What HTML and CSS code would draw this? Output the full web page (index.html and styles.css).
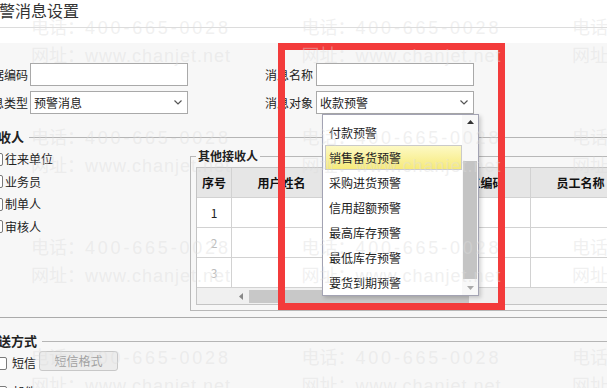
FILE: index.html
```html
<!DOCTYPE html>
<html lang="zh-CN">
<head>
  <meta charset="UTF-8">
  <title>预警消息设置</title>
  <link rel="stylesheet" href="styles.css">
</head>
<body>
  <div class="page">
    <div class="header"><h1>预警消息设置</h1></div>
    <div class="header-gap"></div>

    <div class="main">
      <div class="form-row">
        <label class="lbl">单据编码</label>
        <input type="text" class="txt">
        <label class="lbl lbl-right">消息名称</label>
        <input type="text" class="txt">
      </div>
      <div class="form-row">
        <label class="lbl">消息类型</label>
        <div class="select">
          <span>预警消息</span>
          <svg width="8" height="5" viewBox="0 0 8 5"><polyline points="0.5,0.5 4,4 7.5,0.5" fill="none" stroke="#555" stroke-width="1.2"/></svg>
        </div>
        <label class="lbl lbl-right">消息对象</label>
        <div class="select">
          <span>收款预警</span>
          <svg width="8" height="5" viewBox="0 0 8 5"><polyline points="0.5,0.5 4,4 7.5,0.5" fill="none" stroke="#555" stroke-width="1.2"/></svg>
        </div>
      </div>

      <!-- 接收人 -->
      <div class="section receivers">
        <div class="section-title">接收人</div>
        <div class="receivers-body">
          <ul class="check-list">
            <li><span class="cb"></span>往来单位</li>
            <li><span class="cb"></span>业务员</li>
            <li><span class="cb"></span>制单人</li>
            <li><span class="cb"></span>审核人</li>
          </ul>
          <fieldset class="other">
            <legend>其他接收人</legend>
            <div class="grid">
              <table>
                <colgroup>
                  <col style="width:35px"><col style="width:100px"><col style="width:99px"><col style="width:100px"><col style="width:100px">
                </colgroup>
                <tr><th>序号</th><th>用户姓名</th><th>用户编码</th><th>员工编码</th><th>员工名称</th></tr>
                <tr><td>1</td><td></td><td></td><td></td><td></td></tr>
                <tr class="blank"><td>2</td><td></td><td></td><td></td><td></td></tr>
                <tr class="blank"><td>3</td><td></td><td></td><td></td><td></td></tr>
              </table>
              <div class="hscroll">
                <div class="frozen"></div>
                <div class="arrow"><svg width="4" height="7" viewBox="0 0 4 7"><polygon points="4,0 0,3.5 4,7" fill="#888"/></svg></div>
                <div class="thumb"></div>
              </div>
            </div>
          </fieldset>
        </div>
      </div>

      <!-- 发送方式 -->
      <div class="section send">
        <div class="section-title">发送方式</div>
        <div class="send-row"><span class="cb"></span><span>短信</span><button disabled>短信格式</button></div>
        <div class="send-row"><span class="cb"></span><span>邮件</span></div>
      </div>
    </div>

    <!-- open list of 消息对象 -->
    <div class="dropdown">
      <ul class="options">
        <li>付款预警</li>
        <li class="on">销售备货预警</li>
        <li>采购进货预警</li>
        <li>信用超额预警</li>
        <li>最高库存预警</li>
        <li>最低库存预警</li>
        <li>要货到期预警</li>
      </ul>
      <div class="vscroll">
        <div class="btn"><svg width="7" height="4" viewBox="0 0 7 4"><polygon points="0,4 3.5,0 7,4" fill="#333"/></svg></div>
        <div class="track"><div class="thumb"></div></div>
        <div class="btn"><svg width="7" height="4" viewBox="0 0 7 4"><polygon points="0,0 3.5,4 7,0" fill="#aaa"/></svg></div>
      </div>
    </div>

    <div class="mark-box"></div>

    <div class="watermark">
      <div class="wm"><p><span>电话：</span><span class="tel">400-665-0028</span></p><p><span>网址：</span><span class="url">www.chanjet.net</span></p></div>
      <div class="wm"><p><span>电话：</span><span class="tel">400-665-0028</span></p><p><span>网址：</span><span class="url">www.chanjet.net</span></p></div>
      <div class="wm"><p><span>电话：</span><span class="tel">400-665-0028</span></p><p><span>网址：</span><span class="url">www.chanjet.net</span></p></div>
      <div class="wm"><p><span>电话：</span><span class="tel">400-665-0028</span></p><p><span>网址：</span><span class="url">www.chanjet.net</span></p></div>
      <div class="wm"><p><span>电话：</span><span class="tel">400-665-0028</span></p><p><span>网址：</span><span class="url">www.chanjet.net</span></p></div>
      <div class="wm"><p><span>电话：</span><span class="tel">400-665-0028</span></p><p><span>网址：</span><span class="url">www.chanjet.net</span></p></div>
      <div class="wm"><p><span>电话：</span><span class="tel">400-665-0028</span></p><p><span>网址：</span><span class="url">www.chanjet.net</span></p></div>
      <div class="wm"><p><span>电话：</span><span class="tel">400-665-0028</span></p><p><span>网址：</span><span class="url">www.chanjet.net</span></p></div>
      <div class="wm"><p><span>电话：</span><span class="tel">400-665-0028</span></p><p><span>网址：</span><span class="url">www.chanjet.net</span></p></div>
      <div class="wm"><p><span>电话：</span><span class="tel">400-665-0028</span></p><p><span>网址：</span><span class="url">www.chanjet.net</span></p></div>
      <div class="wm"><p><span>电话：</span><span class="tel">400-665-0028</span></p><p><span>网址：</span><span class="url">www.chanjet.net</span></p></div>
      <div class="wm"><p><span>电话：</span><span class="tel">400-665-0028</span></p><p><span>网址：</span><span class="url">www.chanjet.net</span></p></div>
    </div>
  </div>
</body>
</html>
```

FILE: styles.css
```css
* {
  box-sizing: border-box;
}

body {
  margin: 0;
  overflow: hidden;
  background: #fff;
  color: #222;
  font-family: "Noto Sans CJK SC", "Liberation Sans", sans-serif;
  font-size: 12px;
  line-height: 16px;
}

.page {
  position: relative;
  width: 660px;
  height: 400px;
  margin-left: -24px;
}

.header {
  height: 28px;
  padding-left: 7px;
  border-bottom: 1px solid #dcdcdc;
}

.header h1 {
  margin: 0;
  font-size: 16px;
  font-weight: normal;
  line-height: 20px;
  color: #333;
}

.header-gap {
  height: 15px;
}

.main {
  height: 357px;
  padding-top: 20px;
  background: #f7f7f7;
}

/* top form */
.form-row {
  display: flex;
  align-items: center;
  height: 23px;
  padding-left: 4px;
  margin-bottom: 5px;
}

.lbl {
  width: 48px;
  margin-right: 2px;
  text-align: right;
  white-space: nowrap;
}

.lbl-right {
  margin-left: 77px;
  margin-right: 3px;
}

.txt, .select {
  width: 158px;
  height: 23px;
  margin: 0;
  border: 1px solid #a9a9a9;
  background: #fff;
}

.select {
  display: flex;
  align-items: center;
  justify-content: space-between;
  padding: 0 5px 0 3px;
}

/* sections */
.section-title {
  display: flex;
  align-items: center;
  height: 16px;
  padding-left: 9px;
  font-size: 13px;
  font-weight: bold;
}

.section-title::after {
  content: "";
  flex: 1;
  height: 1px;
  margin-left: 5px;
  background: #b5b5b5;
}

.receivers {
  margin-top: 15px;
  padding-bottom: 6px;
  border-bottom: 1px solid #ababab;
}

.receivers-body {
  display: flex;
  margin-top: 3px;
}

.check-list {
  width: 214px;
  margin: 0;
  padding: 0 0 0 14px;
  list-style: none;
}

.check-list li {
  display: flex;
  align-items: center;
  height: 22.5px;
}

.cb {
  flex: none;
  width: 13px;
  height: 13px;
  border: 1px solid #7a7a7a;
  border-radius: 2px;
  background: #fff;
}

.check-list .cb {
  margin-right: 2px;
}

.other {
  flex: 1;
  min-width: 0;
  margin: 0;
  padding: 0 5px 5px;
  border: 1px solid #b8b8b8;
}

.other legend {
  padding: 0 2px;
  font-weight: bold;
  line-height: 16px;
}

.grid {
  width: 434px;
  margin-top: 3px;
  border: 1px solid #c4c4c4;
  background: #fff;
}

.grid table {
  width: 434px;
  border-collapse: separate;
  border-spacing: 0;
  table-layout: fixed;
}

.grid th, .grid td {
  height: 30px;
  padding: 0;
  border-right: 1px solid #d2d2d2;
  border-bottom: 1px solid #d2d2d2;
  text-align: center;
  white-space: nowrap;
  overflow: hidden;
}

.grid th {
  background: #e6e6e6;
  color: #111;
}

.grid .blank td {
  color: #bdbdbd;
}

.hscroll {
  display: flex;
  height: 16px;
  background: #f0f0f0;
}

.hscroll .frozen {
  width: 35px;
}

.hscroll .arrow {
  display: flex;
  align-items: center;
  justify-content: center;
  width: 17px;
}

.hscroll .thumb {
  width: 220px;
  margin: 2px 0 1px;
  background: #c8c8c8;
}

.send .section-title {
  margin-top: 15px;
}

.send-row {
  display: flex;
  align-items: flex-end;
  height: 20px;
  margin-top: 2px;
  padding-left: 18px;
}

.send-row + .send-row {
  margin-top: 9px;
}

.send-row .cb {
  margin: 0 5px 1px 0;
}

.send-row button {
  width: 79px;
  height: 20px;
  margin-left: 3px;
  padding: 0;
  border: 1px solid #c8c8c8;
  border-radius: 3px;
  background: #ececec;
  color: #a0a0a0;
  font: inherit;
}

/* open select list */
.dropdown {
  position: absolute;
  left: 346px;
  top: 114px;
  display: flex;
  width: 157px;
  height: 182px;
  border: 1px solid #a3a3b3;
  background: #fff;
  box-shadow: 2px 2px 4px rgba(0, 0, 0, 0.18);
}

.options {
  flex: 1;
  margin: 0;
  padding: 5px 0 0 2px;
  list-style: none;
}

.options li {
  height: 25px;
  padding-left: 4px;
  line-height: 25px;
  white-space: nowrap;
}

.options li.on {
  padding-left: 3px;
  border: 1px solid #cacaca;
  line-height: 23px;
  background: linear-gradient(#fdf9c4, #f6ea7a);
}

.vscroll {
  display: flex;
  flex-direction: column;
  width: 16px;
  background: #f8f8f8;
}

.vscroll .btn {
  display: flex;
  align-items: center;
  justify-content: center;
  height: 14px;
}

.vscroll .track {
  flex: 1;
  padding-top: 32px;
}

.vscroll .thumb {
  height: 118px;
  margin: 0 1px;
  background: #c4c4c4;
}

/* red annotation frame */
.mark-box {
  position: absolute;
  left: 302px;
  top: 43px;
  width: 227px;
  height: 267px;
  border: 7px solid #f33b3b;
}

/* watermark */
.watermark {
  position: absolute;
  top: 0;
  left: 0;
  right: 0;
  bottom: 0;
  display: grid;
  grid-template-columns: repeat(3, 270.5px);
  grid-auto-rows: 110px;
  padding: 14px 0 0 55px;
  pointer-events: none;
  color: rgba(220, 220, 220, 0.42);
  font-family: "Liberation Sans", "Noto Sans CJK SC", sans-serif;
  font-size: 18px;
  line-height: 28px;
}

.wm p {
  margin: 0;
  white-space: nowrap;
}

.tel {
  letter-spacing: 2.8px;
}

.url {
  letter-spacing: 1px;
}
```
